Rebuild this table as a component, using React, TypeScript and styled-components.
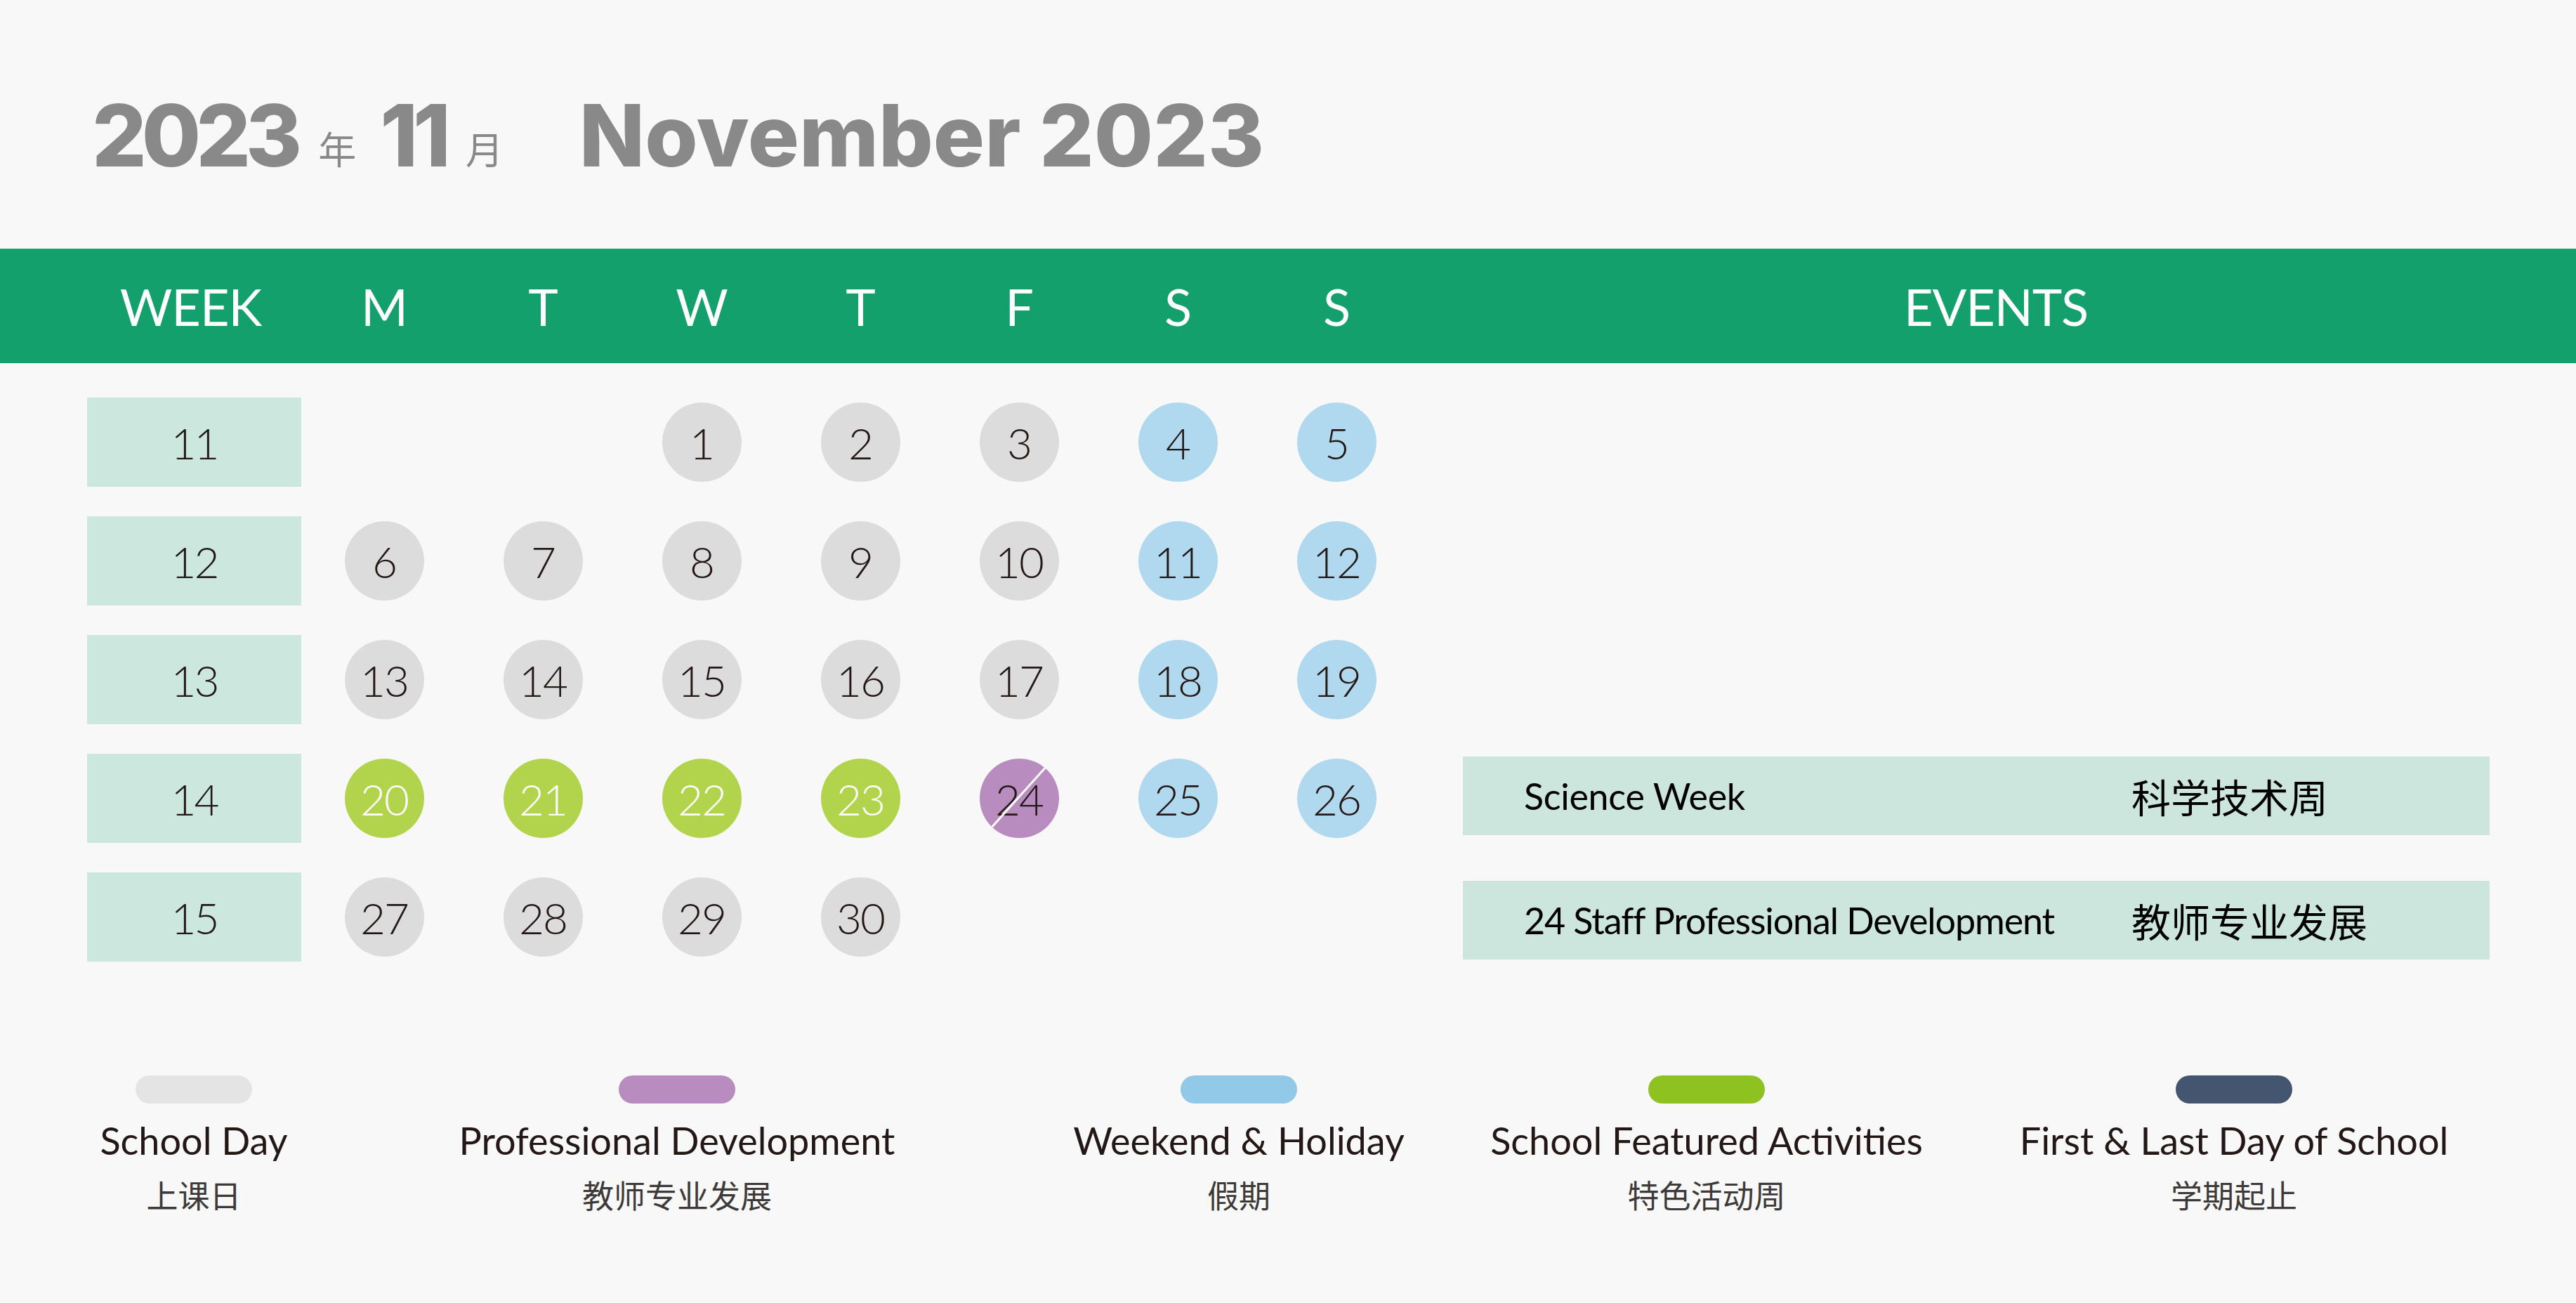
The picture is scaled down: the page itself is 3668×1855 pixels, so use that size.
import styled, { createGlobalStyle } from "styled-components";

type Kind = "school" | "weekend" | "featured" | "staff" | "none";

interface DayCell {
  day?: number;
  kind: Kind;
}

interface WeekRow {
  week: number;
  days: DayCell[];
}

const GlobalStyle = createGlobalStyle`
  html, body {
    margin: 0;
    padding: 0;
    background: #f8f8f8;
  }
  * {
    box-sizing: border-box;
  }
`;

const colors: Record<Kind, string> = {
  school: "#dcdcdc",
  weekend: "#b0d8ee",
  featured: "#b1d44c",
  staff: "#b88cbf",
  none: "transparent",
};

const Page = styled.div`
  width: 3668px;
  height: 1855px;
  background: #f8f8f8;
  font-family: "Lato", "Noto Sans", sans-serif;
  overflow: hidden;
`;

const TitleRow = styled.div`
  display: flex;
  align-items: baseline;
  padding: 132px 0 0 131px;
  height: 354px;
  color: #898989;
  font-family: "Inter", "Lato", sans-serif;
  font-weight: 800;
`;

const Big = styled.span<{ $gap: number; $spacing: number }>`
  font-size: 122px;
  line-height: 122px;
  letter-spacing: ${({ $spacing }) => $spacing}px;
  margin-right: ${({ $gap }) => $gap}px;
`;

const Unit = styled.span<{ $gap: number }>`
  font-family: "Noto Sans CJK SC", sans-serif;
  font-weight: 400;
  font-size: 54px;
  margin-right: ${({ $gap }) => $gap}px;
  position: relative;
  top: -3px;
`;

const Band = styled.div`
  display: grid;
  grid-template-columns: 310px repeat(7, 226px) 1fr;
  align-items: center;
  height: 163px;
  padding-left: 124px;
  background: #14a06d;
  color: #ffffff;
  font-size: 72px;
  font-weight: 400;
`;

const HeadCell = styled.div<{ $width?: number }>`
  width: ${({ $width }) => ($width ? `${$width}px` : "auto")};
  text-align: center;
  letter-spacing: -1px;
`;

const Body = styled.div`
  display: grid;
  grid-template-columns: 310px repeat(7, 226px) 1fr;
  grid-auto-rows: 127px;
  row-gap: 42px;
  padding: 49px 0 0 124px;
`;

const WeekBox = styled.div`
  width: 305px;
  height: 127px;
  display: flex;
  align-items: center;
  justify-content: center;
  background: #cbe7de;
  color: #231815;
  font-size: 62px;
  font-weight: 300;
  letter-spacing: -3px;
`;

const DaySlot = styled.div`
  display: flex;
  align-items: center;
  justify-content: center;
`;

const Circle = styled.div<{ $kind: Kind }>`
  position: relative;
  width: 113px;
  height: 113px;
  border-radius: 50%;
  display: flex;
  align-items: center;
  justify-content: center;
  overflow: hidden;
  background: ${({ $kind }) => colors[$kind]};
  color: ${({ $kind }) => ($kind === "featured" ? "#ffffff" : "#231815")};
  font-size: 62px;
  font-weight: 300;
  letter-spacing: -2px;
`;

const Slash = styled.svg`
  position: absolute;
  inset: 0;
  width: 113px;
  height: 113px;
`;

const EventBar = styled.div<{ $row: number; $shift: number }>`
  grid-column: 9;
  grid-row: ${({ $row }) => $row};
  align-self: center;
  display: grid;
  grid-template-columns: 865px 1fr;
  align-items: center;
  height: 112px;
  margin: ${({ $shift }) => ($shift > 0 ? `${$shift * 2}px` : 0)} 123px
    ${({ $shift }) => ($shift < 0 ? `${-$shift * 2}px` : 0)} 67px;
  padding-left: 87px;
  background: #cce6dd;
  color: #000000;
`;

const EventEn = styled.span<{ $tight?: boolean }>`
  font-size: 52px;
  letter-spacing: ${({ $tight }) => ($tight ? "-1.1px" : "-0.3px")};
  white-space: nowrap;
`;

const EventZh = styled.span`
  font-family: "Noto Sans CJK SC", sans-serif;
  font-size: 56px;
  font-weight: 400;
`;

const Legend = styled.div`
  display: grid;
  grid-template-columns: 472px 904px 696px 636px 866px;
  padding: 162px 0 0 40px;
`;

const LegendItem = styled.div`
  display: flex;
  flex-direction: column;
  align-items: center;
  white-space: nowrap;
`;

const Pill = styled.div<{ $color: string }>`
  width: 166px;
  height: 40px;
  border-radius: 20px;
  background: ${({ $color }) => $color};
`;

const LegendEn = styled.div`
  margin-top: 21px;
  font-size: 54px;
  line-height: 64px;
  color: #231815;
  letter-spacing: 0;
`;

const LegendZh = styled.div`
  margin-top: 18px;
  font-family: "Noto Sans CJK SC", sans-serif;
  font-size: 45px;
  line-height: 54px;
  color: #3e3a39;
`;

const none: DayCell = { kind: "none" };
const d = (day: number, kind: Kind): DayCell => ({ day, kind });

const weeks: WeekRow[] = [
  {
    week: 11,
    days: [none, none, d(1, "school"), d(2, "school"), d(3, "school"), d(4, "weekend"), d(5, "weekend")],
  },
  {
    week: 12,
    days: [d(6, "school"), d(7, "school"), d(8, "school"), d(9, "school"), d(10, "school"), d(11, "weekend"), d(12, "weekend")],
  },
  {
    week: 13,
    days: [d(13, "school"), d(14, "school"), d(15, "school"), d(16, "school"), d(17, "school"), d(18, "weekend"), d(19, "weekend")],
  },
  {
    week: 14,
    days: [d(20, "featured"), d(21, "featured"), d(22, "featured"), d(23, "featured"), d(24, "staff"), d(25, "weekend"), d(26, "weekend")],
  },
  {
    week: 15,
    days: [d(27, "school"), d(28, "school"), d(29, "school"), d(30, "school"), none, none, none],
  },
];

const events = [
  { row: 4, shift: -4, en: "Science Week", zh: "科学技术周", tight: false },
  { row: 5, shift: 4, en: "24 Staff Professional Development", zh: "教师专业发展", tight: true },
];

const legend = [
  { color: "#e4e4e4", en: "School Day", zh: "上课日" },
  { color: "#b88cbf", en: "Professional Development", zh: "教师专业发展" },
  { color: "#92c9e9", en: "Weekend & Holiday", zh: "假期" },
  { color: "#8ec220", en: "School Featured Activities", zh: "特色活动周" },
  { color: "#44566f", en: "First & Last Day of School", zh: "学期起止" },
];

const dayHeads = ["M", "T", "W", "T", "F", "S", "S"];

function App() {
  return (
    <Page>
      <GlobalStyle />
      <TitleRow>
        <Big $gap={30} $spacing={-7}>2023</Big>
        <Unit $gap={34}>年</Unit>
        <Big $gap={28} $spacing={-7}>11</Big>
        <Unit $gap={108}>月</Unit>
        <Big $gap={0} $spacing={0}>November 2023</Big>
      </TitleRow>

      <Band>
        <HeadCell $width={295}>WEEK</HeadCell>
        {dayHeads.map((h, i) => (
          <HeadCell key={i}>{h}</HeadCell>
        ))}
        <HeadCell>EVENTS</HeadCell>
      </Band>

      <Body>
        {weeks.map((w, r) => (
          <>
            <WeekBox key={`w${w.week}`} style={{ gridRow: r + 1 }}>
              {w.week}
            </WeekBox>
            {w.days.map((cell, c) => (
              <DaySlot key={`${w.week}-${c}`} style={{ gridRow: r + 1 }}>
                {cell.day && (
                  <Circle $kind={cell.kind}>
                    {cell.day}
                    {cell.kind === "staff" && (
                      <Slash viewBox="0 0 113 113">
                        <line x1="16" y1="99" x2="96" y2="10" stroke="#ffffff" strokeWidth="3" />
                      </Slash>
                    )}
                  </Circle>
                )}
              </DaySlot>
            ))}
          </>
        ))}
        {events.map((e) => (
          <EventBar key={e.row} $row={e.row} $shift={e.shift}>
            <EventEn $tight={e.tight}>{e.en}</EventEn>
            <EventZh>{e.zh}</EventZh>
          </EventBar>
        ))}
      </Body>

      <Legend>
        {legend.map((l) => (
          <LegendItem key={l.en}>
            <Pill $color={l.color} />
            <LegendEn>{l.en}</LegendEn>
            <LegendZh>{l.zh}</LegendZh>
          </LegendItem>
        ))}
      </Legend>
    </Page>
  );
}

export default App;
